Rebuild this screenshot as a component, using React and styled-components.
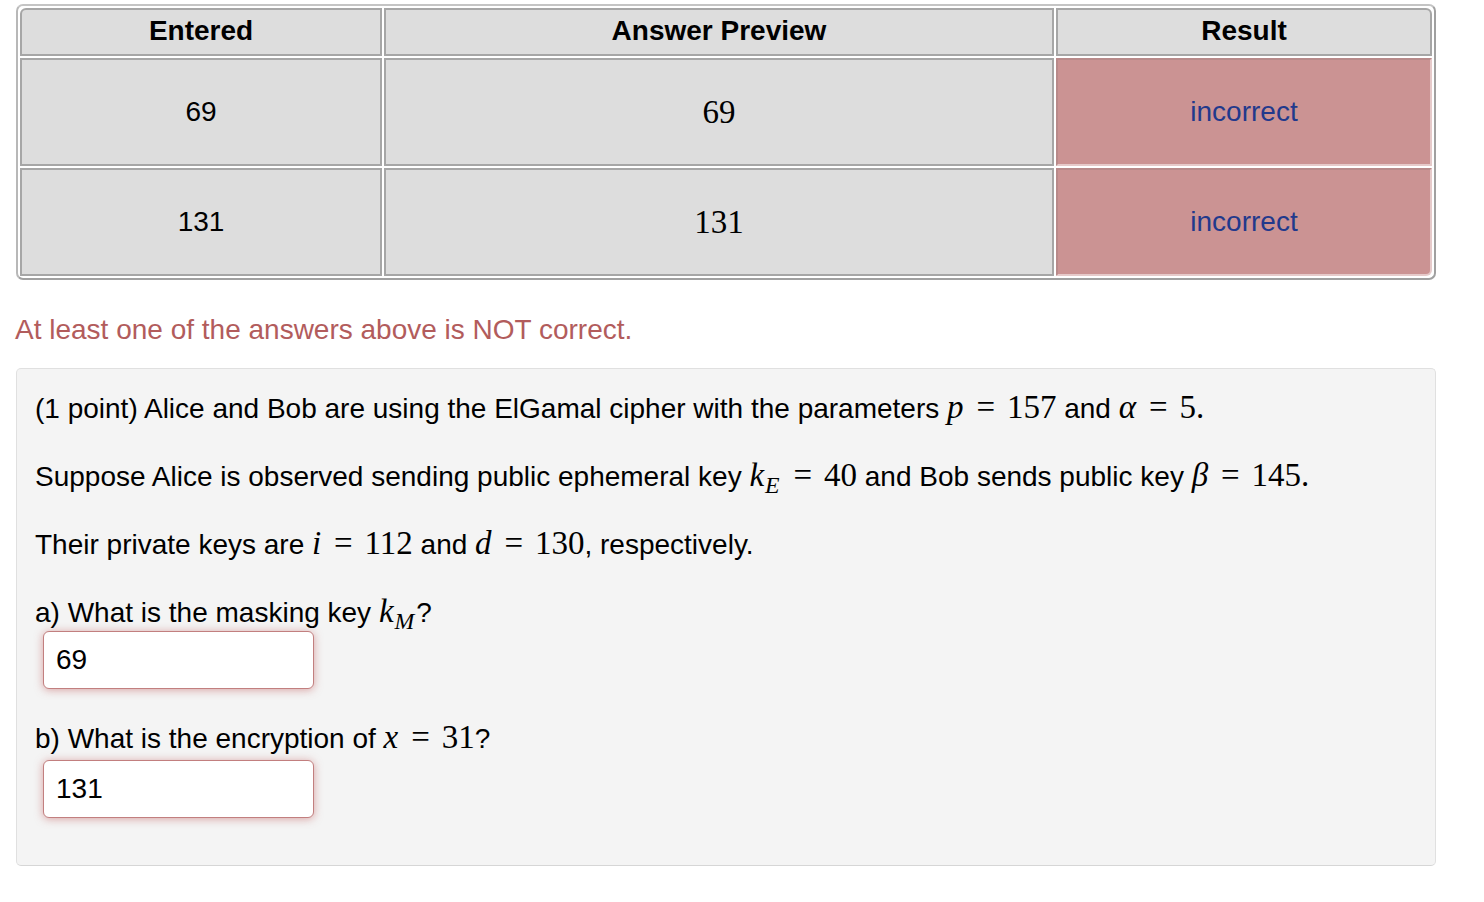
import React from 'react';
import styled, { createGlobalStyle } from 'styled-components';

const GlobalStyle = createGlobalStyle`
  html, body {
    margin: 0;
    padding: 0;
    background: #fff;
  }
  body {
    font-family: "Liberation Sans", Arial, Helvetica, sans-serif;
    color: #000;
  }
`;

const Page = styled.div`
  padding: 4px 0 0 16px;
  width: 1420px;
`;

const ResultsTable = styled.table`
  width: 1420px;
  table-layout: fixed;
  border-collapse: separate;
  border-spacing: 2px;
  border: 2px solid #a0a0a0;
  border-top-color: #c4c4c4;
  border-left-color: #b8b8b8;
  border-radius: 7px;
  background: #fff;
`;

const HeadCell = styled.th`
  height: 42px;
  padding: 0 0 2px;
  background: #dddddd;
  border: 2px solid #a6a6a6;
  font-size: 28px;
  font-weight: bold;
  text-align: center;
  vertical-align: middle;
  border-top-left-radius: ${p => (p.$first ? '6px' : '0')};
  border-top-right-radius: ${p => (p.$last ? '6px' : '0')};
`;

const Cell = styled.td`
  height: 104px;
  padding: 0;
  background: ${p => (p.$bad ? '#cb9393' : '#dddddd')};
  border: 2px solid #a6a6a6;
  border-color: ${p => (p.$bad ? '#b88a8a #e6caca #e6caca #b88a8a' : '#a6a6a6')};
  text-align: center;
  vertical-align: middle;
  font-size: ${p => (p.$serif ? '33px' : '28px')};
  font-family: ${p =>
    p.$serif ? '"Liberation Serif", "Times New Roman", serif' : 'inherit'};
  color: ${p => (p.$bad ? '#22398c' : '#000')};
  border-bottom-right-radius: ${p => (p.$corner ? '6px' : '0')};
`;

const Message = styled.div`
  margin: 32px 0 0 -1px;
  font-size: 28px;
  line-height: 36px;
  color: #b25c5c;
`;

const ProblemBox = styled.div`
  margin-top: 20px;
  width: 1382px;
  padding: 22px 18px 47px;
  background: #f4f4f4;
  border: 1px solid #e0e0e0;
  border-bottom-color: #d6d6d6;
  border-radius: 5px;
`;

const Para = styled.p`
  margin: 0 0 32px;
  font-size: 28px;
  line-height: 36px;
  color: #000;
`;

const Question = styled.p`
  margin: 0;
  font-size: 28px;
  line-height: 36px;
`;

const AnswerInput = styled.input`
  display: block;
  box-sizing: border-box;
  width: 271px;
  height: 58px;
  margin: 0 0 32px 8px;
  padding: 0 12px;
  font-family: "Liberation Sans", Arial, sans-serif;
  font-size: 28px;
  color: #000;
  background: #fff;
  border: 1px solid #c27f7f;
  border-radius: 6px;
  box-shadow: 0 1px 9px rgba(190, 80, 80, 0.5);
  outline: none;

  &:last-child {
    margin-bottom: 0;
  }
`;

const Spacer = styled.div`
  height: 3px;
`;

const Math = styled.span`
  font-family: "Liberation Serif", "Times New Roman", serif;
  font-size: 33px;
  line-height: 0;
  white-space: nowrap;
`;

const V = styled.i`
  font-style: italic;
  padding-right: 1px;
`;

const Op = styled.span`
  margin: 0 0.36em;
`;

const Sub = styled.i`
  font-style: italic;
  font-size: 0.72em;
  line-height: 0;
  vertical-align: -0.28em;
  padding-right: 2px;
`;

const rows = [
  { entered: '69', preview: '69' },
  { entered: '131', preview: '131' }
];

const App = () => {
  return (
    <Page>
      <GlobalStyle />
      <ResultsTable>
        <colgroup>
          <col style={{ width: 362 }} />
          <col style={{ width: 670 }} />
          <col style={{ width: 376 }} />
        </colgroup>
        <thead>
          <tr>
            <HeadCell $first>Entered</HeadCell>
            <HeadCell>Answer Preview</HeadCell>
            <HeadCell $last>Result</HeadCell>
          </tr>
        </thead>
        <tbody>
          {rows.map((r, i) => (
            <tr key={i}>
              <Cell>{r.entered}</Cell>
              <Cell $serif>{r.preview}</Cell>
              <Cell $bad $corner={i === rows.length - 1}>incorrect</Cell>
            </tr>
          ))}
        </tbody>
      </ResultsTable>

      <Message>At least one of the answers above is NOT correct.</Message>

      <ProblemBox>
        <Para>
          (1 point) Alice and Bob are using the ElGamal cipher with the parameters{' '}
          <Math>
            <V>p</V><Op>=</Op>157
          </Math>{' '}
          and{' '}
          <Math>
            <V>α</V><Op>=</Op>5.
          </Math>
        </Para>
        <Para>
          Suppose Alice is observed sending public ephemeral key{' '}
          <Math>
            <V>k</V><Sub>E</Sub><Op>=</Op>40
          </Math>{' '}
          and Bob sends public key{' '}
          <Math>
            <V>β</V><Op>=</Op>145.
          </Math>
        </Para>
        <Para>
          Their private keys are{' '}
          <Math>
            <V>i</V><Op>=</Op>112
          </Math>{' '}
          and{' '}
          <Math>
            <V>d</V><Op>=</Op>130
          </Math>
          , respectively.
        </Para>
        <Question>
          a) What is the masking key{' '}
          <Math>
            <V>k</V><Sub>M</Sub>
          </Math>
          ?
        </Question>
        <AnswerInput defaultValue="69" readOnly />
        <Question>
          b) What is the encryption of{' '}
          <Math>
            <V>x</V><Op>=</Op>31
          </Math>
          ?
        </Question>
        <Spacer />
        <AnswerInput defaultValue="131" readOnly />
      </ProblemBox>
    </Page>
  );
};

export default App;
